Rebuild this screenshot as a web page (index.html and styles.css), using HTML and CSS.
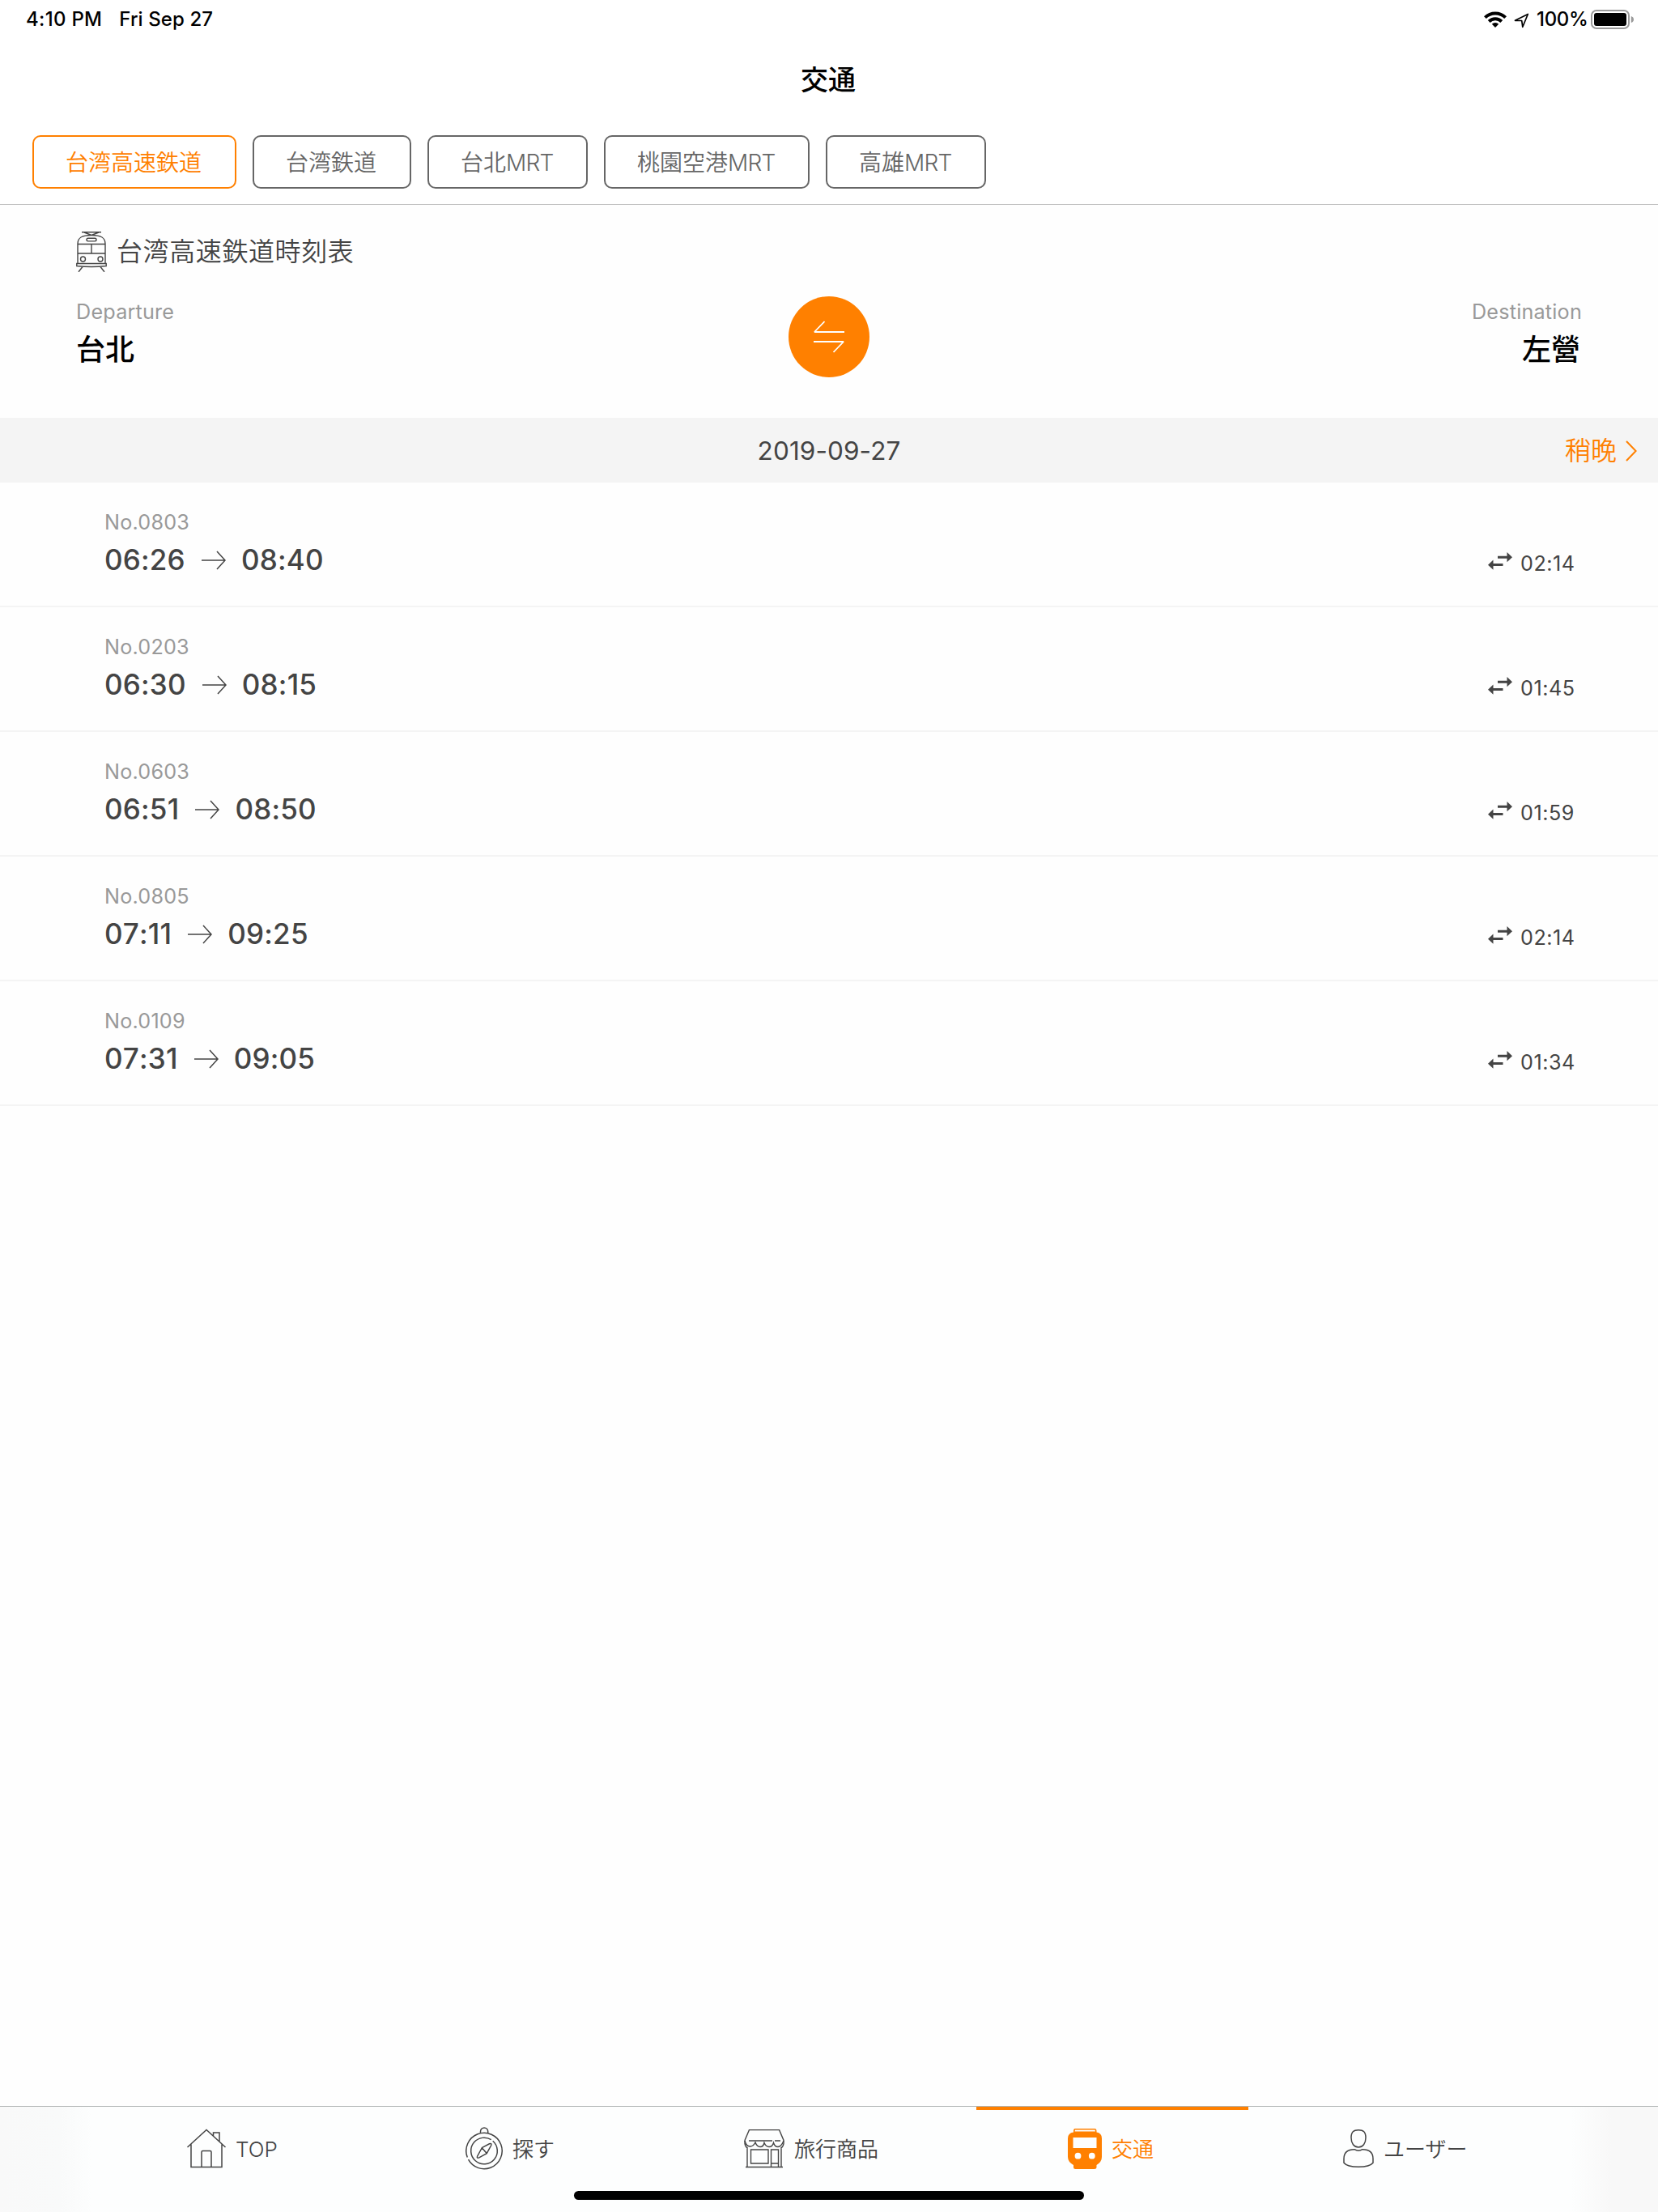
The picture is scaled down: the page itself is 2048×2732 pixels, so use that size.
FILE: index.html
```html
<!DOCTYPE html>
<html lang="ja">
<head>
<meta charset="utf-8">
<title>交通</title>
<link rel="stylesheet" href="styles.css">
</head>
<body>
<svg class="defs" width="0" height="0" aria-hidden="true">
  <symbol id="arrow" viewBox="0 0 30 24">
    <path d="M0 12H29M19 1L29 12L19 23" fill="none" stroke="currentColor" stroke-width="1.5"/>
  </symbol>
  <symbol id="swap" viewBox="0 0 30 22">
    <path d="M12 4.7H23.500V0L30 6.200L23.500 12.300V7.700H12zM18.500 14H6.500V9.500L0 15.700L6.500 21.800V17H18.500z" fill="currentColor"/>
  </symbol>
</svg>
<div class="screen">
  <header class="header">
    <div class="status">
      <span class="clock">4:10 PM</span>
      <span class="day">Fri Sep 27</span>
      <svg class="wifi" width="28" height="20" viewBox="0 0 28 20">
        <g fill="none" stroke="#000" stroke-width="4">
          <path d="M1.400 7.700A17.800 17.800 0 0 1 26.600 7.700"/>
          <path d="M6.200 12.500A11 11 0 0 1 21.800 12.500"/>
        </g>
        <path d="M9.800 15.800A6 6 0 0 1 18.200 15.800L14 20z"/>
      </svg>
      <svg class="location" width="19" height="19" viewBox="0 0 19 19">
        <path d="M1.500 9.300L17.300 1.500L10.800 17.300L9.700 9.500z" fill="none" stroke="#000" stroke-width="1.700" stroke-linejoin="round"/>
      </svg>
      <span class="percent">100%</span>
      <svg class="battery" width="54" height="24" viewBox="0 0 54 24">
        <rect x="1" y="1" width="46" height="22" rx="6" fill="none" stroke="#9a9a9a" stroke-width="2"/>
        <rect x="4" y="4" width="40" height="16" rx="3"/>
        <path d="M49.800 8Q53 9 53 12T49.800 16z" fill="#9a9a9a"/>
      </svg>
    </div>
    <h1 class="title">交通</h1>
    <nav class="chips">
      <a class="chip chip-active">台湾高速鉄道</a>
      <a class="chip">台湾鉄道</a>
      <a class="chip">台北<span class="latin">MRT</span></a>
      <a class="chip">桃園空港<span class="latin">MRT</span></a>
      <a class="chip">高雄<span class="latin">MRT</span></a>
    </nav>
  </header>

  <main class="main">
    <section class="route">
      <h2 class="route-title">
        <svg width="38" height="50" viewBox="0 0 38 50" fill="none" stroke="#444" stroke-width="1.400">
          <path d="M7 .8H31M10 1L19 4.500L28 1M2 39V15C2 7 8 4.500 19 4.500S36 7 36 15V39M2 15.500H36M2 27H36M19 15.500V27"/>
          <rect x="13" y="8.300" width="12" height="3.600" rx="1.800"/>
          <circle cx="8.500" cy="34" r="3"/><circle cx="30" cy="34" r="3"/>
          <path d="M.8 39.500H37.200V42.500Q19 44.500 .8 42.500zM8 43.500L3 49.800M30 43.500L35 49.800"/>
        </svg>
        <span>台湾高速鉄道時刻表</span>
      </h2>
      <div class="stations">
        <div class="station">
          <span class="station-label">Departure</span>
          <span class="station-name">台北</span>
        </div>
        <button class="swap-button" aria-label="swap">
          <svg width="40" height="40" viewBox="0 0 40 40" fill="none" stroke="#fff" stroke-width="1.800" stroke-linejoin="bevel">
            <path d="M39 14H2L14.500 1M1 26H38L25.500 39"/>
          </svg>
        </button>
        <div class="station station-end">
          <span class="station-label">Destination</span>
          <span class="station-name" lang="zh-TW">左營</span>
        </div>
      </div>
    </section>

    <div class="datebar">
      <span class="date">2019-09-27</span>
      <a class="later">稍晚
        <svg width="14" height="26" viewBox="0 0 14 26"><path d="M1 1L12.600 13L1 25" fill="none" stroke="#ff8000" stroke-width="2"/></svg>
      </a>
    </div>

    <ul class="trains">
      <li class="train">
        <div><div class="number">No.0803</div><div class="times"><span>06:26</span><svg class="arrow"><use href="#arrow"/></svg><span>08:40</span></div></div>
        <div class="duration"><svg class="swap"><use href="#swap"/></svg><span>02:14</span></div>
      </li>
      <li class="train">
        <div><div class="number">No.0203</div><div class="times"><span>06:30</span><svg class="arrow"><use href="#arrow"/></svg><span>08:15</span></div></div>
        <div class="duration"><svg class="swap"><use href="#swap"/></svg><span>01:45</span></div>
      </li>
      <li class="train">
        <div><div class="number">No.0603</div><div class="times"><span>06:51</span><svg class="arrow"><use href="#arrow"/></svg><span>08:50</span></div></div>
        <div class="duration"><svg class="swap"><use href="#swap"/></svg><span>01:59</span></div>
      </li>
      <li class="train">
        <div><div class="number">No.0805</div><div class="times"><span>07:11</span><svg class="arrow"><use href="#arrow"/></svg><span>09:25</span></div></div>
        <div class="duration"><svg class="swap"><use href="#swap"/></svg><span>02:14</span></div>
      </li>
      <li class="train">
        <div><div class="number">No.0109</div><div class="times"><span>07:31</span><svg class="arrow"><use href="#arrow"/></svg><span>09:05</span></div></div>
        <div class="duration"><svg class="swap"><use href="#swap"/></svg><span>01:34</span></div>
      </li>
    </ul>
  </main>

  <nav class="tabbar">
    <a class="tab">
      <svg width="48" height="50" viewBox="0 1 48 50" fill="none" stroke="#444" stroke-width="1.500">
        <path d="M.5 24L24 2.500L47.500 24M5 20.500V48.500H43V20.500M18 48.500V30Q18 28.500 19.500 28.500H28.500Q30 28.500 30 30V48.500M32.500 10V6H40V17"/>
      </svg>
      <span>TOP</span>
    </a>
    <a class="tab tab-explore">
      <svg width="48" height="54" viewBox="0 0 48 54" fill="none" stroke="#444" stroke-width="1.500">
        <circle cx="23" cy="29.500" r="22.200" pathLength="360" stroke-dasharray="352 8" transform="rotate(159 23 29.500)"/>
        <circle cx="23" cy="29.500" r="16.300" pathLength="360" stroke-dasharray="351 9" transform="rotate(-49 23 29.500)"/>
        <path d="M18.500 7.500V5.500A4.600 4.600 0 0 1 27.700 5.500V7.500"/>
        <path d="M20.300 25.700L29.500 20.800Q32.500 19.700 31.800 22.500L26.200 32.600L16.800 37.900Q13.600 39 14.600 36.200zM20.300 25.700L26.200 32.600"/>
      </svg>
      <span>探す</span>
    </a>
    <a class="tab">
      <svg width="50" height="48" viewBox="0 .5 50 48" fill="none" stroke="#444" stroke-width="1.400">
        <path d="M1 14L6.500 1H43.500L49 14V18Q48 22.500 46 23V47M1 14V18Q2 22.500 4 23V47M6 14.500H35M38 14.500H45M2 47H48"/>
        <path d="M1 14.500Q3 22 8 21.500Q12 21 14 16.500Q16 22 20 22T25 17Q27 22 31 22T36.500 17Q38 22 42 22T49 14.500"/>
        <path d="M8.500 25.500H30V42.500H8.500zM33.500 47V25.500H42.500V47M33.500 42.500H42.500"/>
      </svg>
      <span>旅行商品</span>
    </a>
    <a class="tab tab-active">
      <svg width="42" height="50" viewBox="0 0 42 50">
        <path fill="#ff8000" fill-rule="evenodd" d="M9 0H33Q35.500 0 35.500 3V4.500Q42 5.500 42 12V35Q42 41 35.500 45V47.500Q35.500 50 32.500 50H9.500Q7 50 7 47.500V45Q0 41 0 35V12Q0 5.500 7 4.500V3Q7 0 9 0zM9 1.500L8.500 3.500H34L33.500 1.500zM6.500 11V24H35.500V11zM12.500 29.800A3.900 3.900 0 1 0 12.500 37.600A3.900 3.900 0 1 0 12.500 29.800zM29.800 29.800A3.900 3.900 0 1 0 29.800 37.600A3.900 3.900 0 1 0 29.800 29.800z"/>
      </svg>
      <span>交通</span>
    </a>
    <a class="tab">
      <svg width="38" height="48" viewBox="0 .8 38 48" fill="none" stroke="#444" stroke-width="1.500">
        <path d="M19 1.600C25 1.600 28 3.500 28 11C28 18 24.500 22.700 19 22.700S10 18 10 11C10 3.500 13 1.600 19 1.600zM14 25.500C5 25.500 1 29 1 37V42Q5 47 19 47T37 42V37C37 29 33 25.500 24 25.500Q19 28.500 14 25.500z"/>
      </svg>
      <span>ユーザー</span>
    </a>
    <div class="home-indicator"></div>
  </nav>
</div>
</body>
</html>
```

FILE: styles.css
```css
* { box-sizing: border-box; margin: 0; padding: 0; }

body {
  font-family: Inter, "Noto Sans CJK JP", sans-serif;
  background: #fff;
  color: #444;
}

[lang="zh-TW"] { font-family: Inter, "Noto Sans CJK TC", sans-serif; }

svg { display: block; flex: none; }
.defs { position: absolute; }

.screen {
  display: flex;
  flex-direction: column;
  width: 2048px;
  height: 2732px;
  overflow: hidden;
}

/* Header */
.header { height: 253px; border-bottom: 1px solid #bebebe; background: #fff; }

.status {
  display: flex;
  align-items: center;
  height: 48px;
  padding: 0 29px 0 32px;
  color: #000;
  font-size: 24px;
  line-height: 48px;
  font-weight: 500;
}
.clock { letter-spacing: .3px; }
.day { margin-left: 21px; letter-spacing: .1px; }
.wifi { margin-left: auto; }
.location { margin: 2px 9px 0 9px; }
.percent { width: 67px; letter-spacing: -.3px; }

.title {
  height: 100px;
  padding-right: 2px;
  line-height: 102px;
  font-size: 34px;
  font-weight: 500;
  text-align: center;
  color: #000;
}

.chips { display: flex; gap: 20px; padding: 19px 40px 0; }
.chip {
  height: 66px;
  padding: 0 41px 0 39px;
  border: 2px solid #666;
  border-radius: 10px;
  font-size: 28px;
  line-height: 64px;
  font-weight: 350;
  white-space: nowrap;
  color: #666;
}
.latin { display: inline-block; width: 58px; letter-spacing: -.8px; }
.chip-active { border-color: #ff8000; color: #ff8000; }

/* Route */
.main { flex: 1; background: #fefefe; }
.route { height: 263px; padding: 33px 94px 0; }
.route-title {
  display: flex;
  align-items: center;
  gap: 12px;
  height: 50px;
  font-size: 32px;
  line-height: 48px;
  font-weight: 350;
  letter-spacing: .6px;
}
.stations {
  display: grid;
  grid-template-columns: 1fr 100px 1fr;
  margin-top: 30px;
}
.station { display: flex; flex-direction: column; gap: 6px; padding-top: 3px; }
.station-end { align-items: flex-end; }
.station-label { font-size: 25.200px; line-height: 32px; letter-spacing: .2px; color: #999; }
.station-name { font-size: 36px; line-height: 50px; font-weight: 500; color: #000; }
.station-end .station-name { padding-right: 2px; }
.swap-button {
  display: grid;
  place-items: center;
  width: 100px;
  height: 100px;
  border: 0;
  border-radius: 50%;
  background: #ff8000;
}

/* Date */
.datebar {
  display: grid;
  grid-template-columns: 1fr auto 1fr;
  align-items: center;
  height: 80px;
  padding-right: 26px;
  padding-left: 26px;
  background: #f4f4f4;
  line-height: 82px;
}
.date { grid-column: 2; font-size: 31.500px; letter-spacing: .1px; }
.later {
  display: flex;
  align-items: center;
  justify-content: flex-end;
  gap: 11px;
  font-size: 32px;
  font-weight: 350;
  color: #ff8000;
}

/* Timetable */
.trains { list-style: none; }
.train {
  display: flex;
  justify-content: space-between;
  height: 154px;
  padding: 33px 101px 0 129px;
  border-bottom: 2px solid #f4f4f4;
}
.number { font-size: 25.200px; line-height: 32px; letter-spacing: .2px; color: #999; }
.times {
  display: flex;
  align-items: center;
  margin-top: 6px;
  font-size: 35px;
  line-height: 49px;
  font-weight: 500;
  font-kerning: none;
  letter-spacing: .2px;
}
.arrow { width: 30px; height: 24px; margin: 0 19px 0 20px; }
.duration {
  display: flex;
  align-items: center;
  gap: 10px;
  height: 32px;
  margin-top: 50px;
  line-height: 32px;
  font-size: 25.200px;
  letter-spacing: .5px;
}
.duration span { width: 69px; padding-top: 1px; }
.swap { width: 30px; height: 22px; margin-bottom: 4px; }

/* Tab bar */
.tabbar {
  position: relative;
  display: grid;
  grid-template-columns: 344px 344px 400px 340px 1fr;
  height: 131px;
  padding-left: 231px;
  border-top: 1px solid #b0b4b4;
  background: linear-gradient(90deg, #f9f9f9 0, #f9fafa 75px, #fdfefe 115px, #fdfefe 1940px, #f8f8f8 1990px);
}
.tab {
  position: relative;
  display: flex;
  align-items: center;
  gap: 12px;
  height: 103px;
  font-size: 26px;
  line-height: 103px;
  font-weight: 350;
}
.tab span { padding-top: 2px; }
.tab-explore { gap: 10px; }
.tab-active { color: #ff8000; }
.tab-active::before {
  content: "";
  position: absolute;
  top: 0;
  left: -113px;
  width: 336px;
  height: 4px;
  background: #ff8000;
}
.home-indicator {
  position: absolute;
  left: 709px;
  bottom: 15px;
  width: 630px;
  height: 11px;
  border-radius: 6px;
  background: #000;
}
```
